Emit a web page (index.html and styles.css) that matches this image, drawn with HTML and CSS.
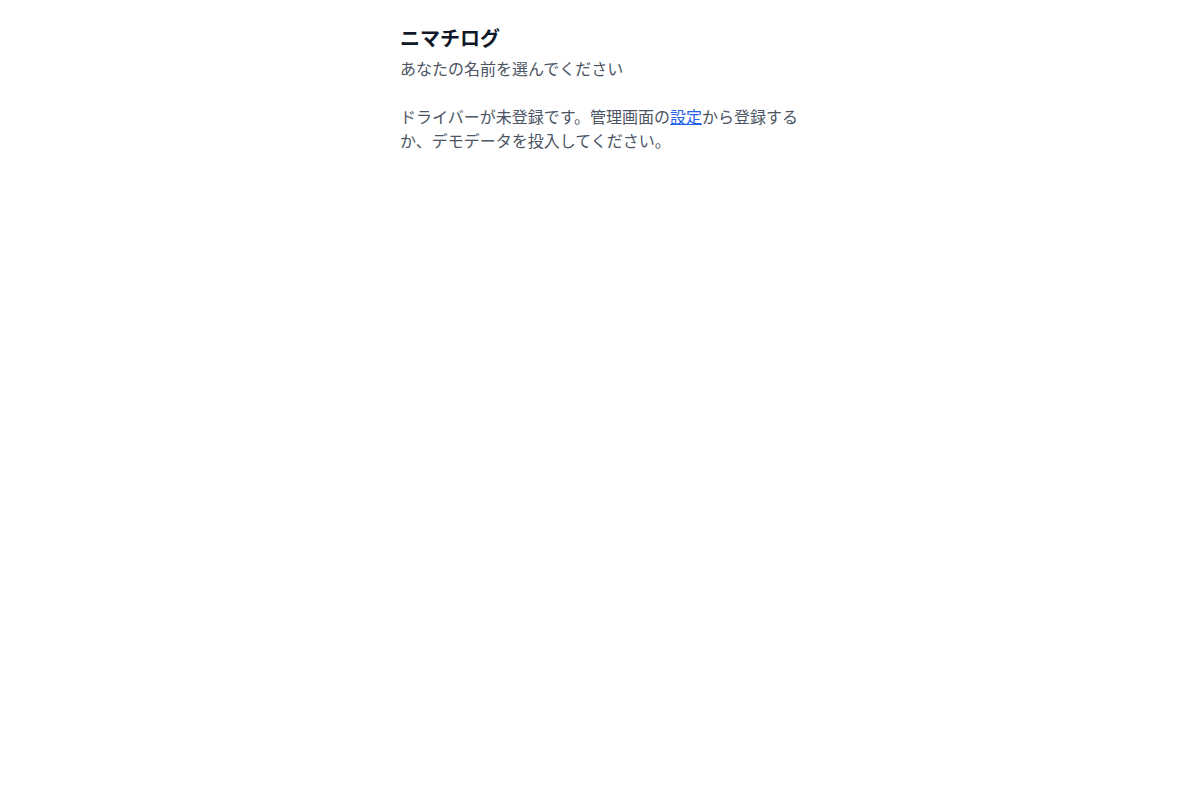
FILE: index.html
```html
<!DOCTYPE html>
<html lang="ja">
<head>
<meta charset="utf-8">
<title>ニマチログ</title>
<link rel="stylesheet" href="styles.css">
</head>
<body>
<main class="container">
  <h1 class="title">ニマチログ</h1>
  <p class="subtitle">あなたの名前を選んでください</p>
  <p class="notice">ドライバーが未登録です。管理画面の<a class="link" href="#">設定</a>から登録するか、デモデータを投入してください。</p>
</main>
</body>
</html>
```

FILE: styles.css
```css
html, body {
  margin: 0;
  padding: 0;
  background: #ffffff;
}
body {
  font-family: "Noto Sans CJK JP", "Noto Sans", sans-serif;
  color: #374151;
}
.container {
  max-width: 400px;
  margin: 0 auto;
  padding: 24px 0;
}
.title {
  margin: 0;
  font-size: 20px;
  line-height: 28px;
  font-weight: 700;
  color: #111827;
}
.subtitle {
  margin: 4px 0 0;
  font-size: 16px;
  line-height: 24px;
  color: #4b5563;
}
.notice {
  margin: 24px 0 0;
  font-size: 16px;
  line-height: 24px;
  color: #4b5563;
}
.link {
  color: #2563eb;
  text-decoration: underline;
}
```
